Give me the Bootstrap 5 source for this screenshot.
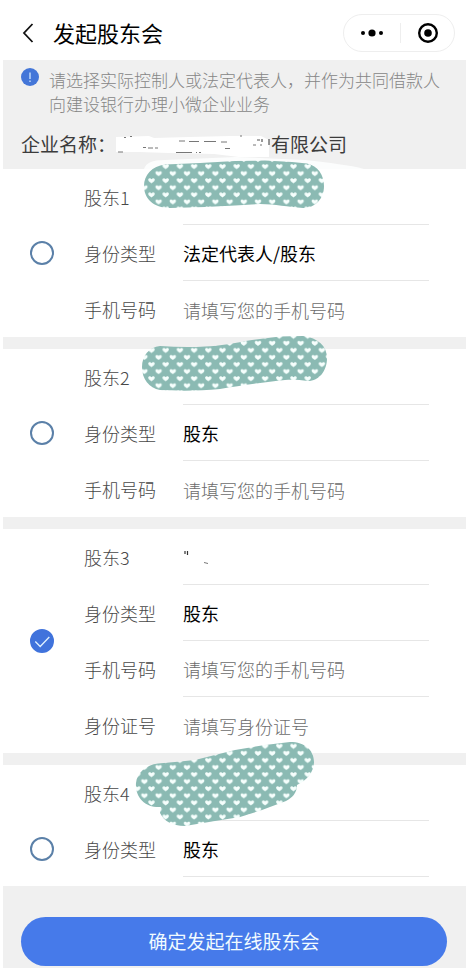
<!DOCTYPE html>
<html lang="zh-CN">
<head>
<meta charset="utf-8">
<meta name="viewport" content="width=device-width, initial-scale=1">
<title>发起股东会</title>
<link href="https://cdn.jsdelivr.net/npm/bootstrap@5.3.0/dist/css/bootstrap.min.css" rel="stylesheet">
<style>
body { font-family: "Noto Sans CJK SC", sans-serif; font-size: 18px; line-height: 24px; color: #666; background: #fff; }
.app { padding: 0 4px 2px 3px; }
.topbar { height: 60px; padding: 0 11px 0 18px; }
.topbar h1 { font-size: 22px; line-height: 32px; color: #000; padding-top: 4px; }
.back { width: 14px; height: 24px; margin-right: 18px; margin-top: 5px; }
.capsule { width: 112px; height: 38px; border: 1px solid #eee; margin-top: 5px; }
.capsule .btn { line-height: 0; }
.capsule .split { width: 1px; height: 20px; background: #eee; }
.greyed { background: #f0f0f0; }
.intro { height: 109px; padding: 8px 18px 0; }
.notice { font-size: 17px; color: #868686; font-weight: 300; gap: 10px; }
.company { font-size: 19px; line-height: 28px; color: #3c3c3c; padding-top: 14px; margin-right: -18px; }
.holder { background: #fff; padding-right: 37px; margin-bottom: 12px; }
.picker { width: 81px; padding-left: 27px; }
.picker .form-check-input { width: 24px; height: 24px; margin: 0; border: 2px solid #5b80a8; background-color: #fff; }
.picker .form-check-input:checked { border-color: #4073dc; background-color: #4073dc; background-origin: border-box; background-size: 24px 24px;
  background-image: url("data:image/svg+xml,%3Csvg xmlns='http://www.w3.org/2000/svg' viewBox='0 0 24 24'%3E%3Cpath d='M5.3 12.5 10.2 17.5 19.3 8' fill='none' stroke='%23dff1ff' stroke-width='1.3'/%3E%3C/svg%3E"); }
.line { height: 56px; }
.line .caption { width: 99px; color: #484848; font-weight: 300; }
.line .entry { border-bottom: 1px solid #e6e6e6; padding-top: 1px; color: #000; }
.line.bare .entry { border-color: transparent; padding-top: 2px; }
.entry .form-control { font-size: 18px; line-height: 24px; color: #111; box-shadow: none; }
.entry .form-control::placeholder { color: #6c6c6c; font-weight: 300; opacity: 1; }
.mask { position: absolute; pointer-events: none; z-index: 2; }
.mask-1 { left: 137px; top: -13px; }
.mask-2 { left: 137px; top: -19px; }
.mask-4 { left: 127px; top: -29px; }
.cut { height: 168px; margin-bottom: 0; }
.foot { padding: 31px 19px 2px 18px; z-index: 3; }
.confirm { height: 49px; font-size: 19px; background: #467aea; color: #f1fbff; }
.confirm:hover { background: #3a6cd8; color: #fff; }
</style>
<script src="https://cdn.jsdelivr.net/npm/bootstrap@5.3.0/dist/js/bootstrap.bundle.min.js"></script>
</head>
<body>
<div class="app vh-100 d-flex flex-column overflow-hidden">
  <header class="topbar d-flex align-items-center flex-shrink-0">
    <button type="button" class="btn p-0 border-0 back d-flex align-items-center" aria-label="返回">
      <svg width="14" height="24" viewBox="0 0 14 24"><path d="M11.500 3 3 12l8.500 9" fill="none" stroke="#111" stroke-width="1.800"/></svg>
    </button>
    <h1 class="m-0 fw-normal flex-grow-1">发起股东会</h1>
    <div class="capsule d-flex align-items-center rounded-pill">
      <button type="button" class="btn p-0 border-0 flex-fill" aria-label="更多">
        <svg width="24" height="12" viewBox="0 0 24 12"><circle cx="3" cy="6" r="2"/><circle cx="12" cy="6" r="3.600"/><circle cx="21" cy="6" r="2"/></svg>
      </button>
      <span class="split"></span>
      <button type="button" class="btn p-0 border-0 flex-fill" aria-label="关闭">
        <svg width="22" height="22" viewBox="0 0 22 22"><circle cx="12" cy="11" r="8.800" fill="none" stroke="#000" stroke-width="2.400"/><circle cx="12" cy="11" r="3.800"/></svg>
      </button>
    </div>
  </header>

  <main class="greyed flex-grow-1 overflow-hidden">
    <section class="intro">
      <div class="notice d-flex align-items-start">
        <svg class="flex-shrink-0" width="18" height="18" viewBox="0 0 18 18"><circle cx="9" cy="9" r="9" fill="#4476d8"/><path d="M9 4.500v6.500M9 12.500v1.500" stroke="#cfe6ff" stroke-width="1.300"/></svg>
        <p class="m-0 text-nowrap">请选择实际控制人或法定代表人，并作为共同借款人<br>向建设银行办理小微企业业务</p>
      </div>
      <div class="company d-flex">
        <span class="text-nowrap">企业名称：</span>
        <svg class="flex-shrink-0" width="155" height="28" viewBox="117 130 155 28" aria-hidden="true">
          <path d="M117 137 150 136 155 138 190 137 232 136 262 136 270 140V157L240 157 215 154 170 153 140 152 117 152Z" fill="#fff"/>
          <path d="M119 152h5M177 152.500h16M197 152.500h1M200 152.500h2M180 141h6M190 141.500h10M205 141.500h12M222 142h6M144 147.500h3M149 148h5M156 148h3M226 148.500h5M254 145h3M261 145h2M125 137.500h2M131 136.500h2M241 136h2" stroke="#777" stroke-width="1" fill="none"/>
          <path d="M263 139v3M258 140h3M270 139v6" stroke="#555" stroke-width="1.200"/>
        </svg>
        <span class="text-nowrap">有限公司</span>
      </div>
    </section>

    <section class="holder position-relative d-flex">
      <svg class="mask mask-1" width="230" height="56" viewBox="140 156 230 56" aria-hidden="true">
        <defs>
          <pattern id="hearts" x="158.600" y="163" width="14.200" height="14.140" patternUnits="userSpaceOnUse">
            <rect width="15" height="15" fill="#8bbab3"/>
            <path id="heart" d="M7.100 6.100C5.300 5.100 3.900 4 3.900 2.700 3.900 1 6.200 .8 7.100 2.200 8 .8 10.300 1 10.300 2.700 10.300 4 8.900 5.100 7.100 6.100Z" fill="#f6fffd"/>
            <use href="#heart" x="-7.100" y="7.070"/><use href="#heart" x="7.100" y="7.070"/>
          </pattern>
        </defs>
        <path d="M144 169C146 163 152 160 165 160L236 157 305 160C330 163 350 165 364 169Z" fill="#fcfdfd"/>
        <path d="M165 164.500 200 163 235 161 265 160.500 292 162 307 163.500C318 166 324 175 324 186 324 199 315 208 303 208 288 207 275 204 260 204L235 205.500 205 207 170 208C153 208 144 198 144 186 144 175 152 166 165 164.500Z" fill="url(#hearts)"/>
      </svg>
      <div class="picker d-flex align-items-center"><input class="form-check-input" type="radio" name="holder" id="h1" aria-label="选择股东1"></div>
      <div class="flex-grow-1">
        <div class="line d-flex"><label for="h1" class="caption d-flex align-items-center">股东1</label><div class="entry flex-grow-1"></div></div>
        <div class="line d-flex"><div class="caption d-flex align-items-center">身份类型</div><div class="entry flex-grow-1 d-flex align-items-center">法定代表人/股东</div></div>
        <div class="line bare d-flex"><label for="p1" class="caption d-flex align-items-center">手机号码</label><div class="entry flex-grow-1 d-flex align-items-center"><input id="p1" type="tel" class="form-control border-0 p-0 bg-transparent" placeholder="请填写您的手机号码"></div></div>
      </div>
    </section>

    <section class="holder position-relative d-flex">
      <svg class="mask mask-2" width="190" height="64" viewBox="140 330 190 64" aria-hidden="true">
        <path d="M160 346C175 347 190 347.500 205 346.500 220 346 235 343 252 340L280 336.500 303 336C318 338 327 346 327 358 327 371 319 381 308 381 300 380 293 379.500 285 380 265 382 240 386 220 389 200 391 178 391 160 390 149 388 142 379 142 367 142 356 149 347 160 346Z" fill="url(#hearts)"/>
      </svg>
      <div class="picker d-flex align-items-center"><input class="form-check-input" type="radio" name="holder" id="h2" aria-label="选择股东2"></div>
      <div class="flex-grow-1">
        <div class="line d-flex"><label for="h2" class="caption d-flex align-items-center">股东2</label><div class="entry flex-grow-1"></div></div>
        <div class="line d-flex"><div class="caption d-flex align-items-center">身份类型</div><div class="entry flex-grow-1 d-flex align-items-center">股东</div></div>
        <div class="line bare d-flex"><label for="p2" class="caption d-flex align-items-center">手机号码</label><div class="entry flex-grow-1 d-flex align-items-center"><input id="p2" type="tel" class="form-control border-0 p-0 bg-transparent" placeholder="请填写您的手机号码"></div></div>
      </div>
    </section>

    <section class="holder position-relative d-flex">
      <div class="picker d-flex align-items-center"><input class="form-check-input" type="radio" name="holder" id="h3" aria-label="选择股东3" checked></div>
      <div class="flex-grow-1">
        <div class="line d-flex"><label for="h3" class="caption d-flex align-items-center">股东3</label><div class="entry flex-grow-1 d-flex align-items-center">
          <svg width="28" height="18" viewBox="183 549 28 18" aria-hidden="true"><path d="M185 552v3M187.500 552v4" stroke="#333" stroke-width="1.200"/><path d="M204 563.500l4 1" stroke="#777" stroke-width="1"/></svg>
        </div></div>
        <div class="line d-flex"><div class="caption d-flex align-items-center">身份类型</div><div class="entry flex-grow-1 d-flex align-items-center">股东</div></div>
        <div class="line d-flex"><label for="p3" class="caption d-flex align-items-center">手机号码</label><div class="entry flex-grow-1 d-flex align-items-center"><input id="p3" type="tel" class="form-control border-0 p-0 bg-transparent" placeholder="请填写您的手机号码"></div></div>
        <div class="line bare d-flex"><label for="i3" class="caption d-flex align-items-center">身份证号</label><div class="entry flex-grow-1 d-flex align-items-center"><input id="i3" type="text" class="form-control border-0 p-0 bg-transparent" placeholder="请填写身份证号"></div></div>
      </div>
    </section>

    <section class="holder cut position-relative d-flex">
      <svg class="mask mask-4" width="190" height="96" viewBox="130 736 190 96" aria-hidden="true">
        <path d="M158 763.500 175 762 195 760 235 750 265 745 290 742C305 742 314 750 314 762 314 772 307 780 297 785 297 793 292 798 286 801L262 810 240 817 215 821 185 826C172 826 164 821 160 813L161 807C145 808 135 797 136 783 137 773 146 765 158 763.500Z" fill="url(#hearts)"/>
      </svg>
      <div class="picker d-flex align-items-center"><input class="form-check-input" type="radio" name="holder" id="h4" aria-label="选择股东4"></div>
      <div class="flex-grow-1">
        <div class="line d-flex"><label for="h4" class="caption d-flex align-items-center">股东4</label><div class="entry flex-grow-1"></div></div>
        <div class="line d-flex"><div class="caption d-flex align-items-center">身份类型</div><div class="entry flex-grow-1 d-flex align-items-center">股东</div></div>
      </div>
    </section>
  </main>

  <footer class="foot greyed flex-shrink-0 position-relative">
    <button type="button" class="btn confirm w-100 rounded-pill border-0">确定发起在线股东会</button>
  </footer>
</div>
</body>
</html>
